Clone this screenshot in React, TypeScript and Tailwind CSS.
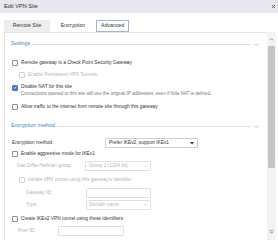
import React from 'react';

const Check = ({ checked = false, disabled = false }: { checked?: boolean; disabled?: boolean }) => (
  <div
    className={
      checked
        ? 'w-[6px] h-[6px] rounded-[1px] bg-[#4a78c2] border border-[#4a78c2] flex items-center justify-center shrink-0'
        : disabled
        ? 'w-[6px] h-[6px] rounded-[1px] bg-white border border-[#d0d0d0] shrink-0'
        : 'w-[6px] h-[6px] rounded-[1px] bg-white border border-[#8c8c8c] shrink-0'
    }
  >
    {checked && (
      <svg width="5" height="5" viewBox="0 0 10 10">
        <path d="M1.5 5.2 L4 7.6 L8.6 2.4" fill="none" stroke="white" strokeWidth="1.8" />
      </svg>
    )}
  </div>
);

const Chevron = ({ color = '#9a9a9a', size = 5 }: { color?: string; size?: number }) => (
  <svg width={size} height={size} viewBox="0 0 10 10">
    <path d="M2 3.5 L5 6.5 L8 3.5" fill="none" stroke={color} strokeWidth="1.4" />
  </svg>
);

const Section = ({ title }: { title: string }) => (
  <div className="flex items-center h-[8px] -ml-[1px] pr-[8px]">
    <span className="text-[5.3px] leading-none text-[#3d85c6]">{title}</span>
    <div className="flex-1 h-px bg-[#e0e0e0] ml-[2px] mr-[4px]" />
    <Chevron />
  </div>
);

const CheckRow = ({
  label,
  checked,
  disabled,
  indent,
  className = '',
}: {
  label: string;
  checked?: boolean;
  disabled?: boolean;
  indent?: boolean;
  className?: string;
}) => (
  <div className={`flex items-center gap-[3px] h-[8px] ${indent ? 'ml-[7px]' : ''} ${className}`}>
    <Check checked={checked} disabled={disabled} />
    <span className={`text-[4.8px] leading-none ${disabled ? 'text-[#b4b4b4]' : 'text-[#333]'}`}>{label}</span>
  </div>
);

export default function App() {
  return (
    <div className="w-[278px] h-[240px] bg-white overflow-hidden font-['Liberation_Sans',Arial,sans-serif]">
      <div className="h-[13px] bg-[#e7e7ef] flex items-center justify-between pl-[4px] pr-[2px]">
        <span className="text-[5.6px] leading-none text-[#333]">Edit VPN Site</span>
        <svg width="5" height="5" viewBox="0 0 10 10">
          <path d="M2 2 L8 8 M8 2 L2 8" stroke="#555" strokeWidth="1.6" />
        </svg>
      </div>

      <div className="mt-[7px] h-[12px] flex pl-[4px] text-[5.2px] leading-none text-[#333]">
        <div className="w-[46px] bg-[#eeeeee] flex items-center justify-center">Remote Site</div>
        <div className="w-[46px] flex items-center justify-center">Encryption</div>
        <div className="w-[33px] border border-[#9fb4d4] bg-white flex items-center justify-center">Advanced</div>
      </div>

      <div className="flex h-[208px]">
        <div className="ml-[4px] flex-1 border-t border-l border-[#e3e3e3] pl-[7px] pt-[7px] flex flex-col">
          <Section title="Settings" />
          <CheckRow className="mt-[11px]" label="Remote gateway is a Check Point Security Gateway" />
          <CheckRow className="mt-[4px]" indent disabled label="Enable Permanent VPN Tunnels" />
          <CheckRow className="mt-[5px] !h-[7px]" checked label="Disable NAT for this site" />
          <div className="h-[6px] flex items-center pl-[9px] text-[4.6px] leading-none text-[#7a7a7a]">
            Connections opened to this site will use the original IP addresses, even if hide NAT is defined.
          </div>
          <CheckRow className="mt-[6px]" label="Allow traffic to the internet from remote site through this gateway" />

          <div className="mt-[11px]">
            <Section title="Encryption method" />
          </div>

          <div className="mt-[8px] h-[10px] flex items-center">
            <span className="w-[93px] text-[4.8px] leading-none text-[#333]">Encryption method:</span>
            <div className="w-[93px] h-[10px] border border-[#cfcfcf] rounded-[1px] flex items-center justify-between pl-[3px] pr-[3px]">
              <span className="text-[4.8px] leading-none text-[#333]">Prefer IKEv2, support IKEv1</span>
              <svg width="4" height="3" viewBox="0 0 8 6">
                <path d="M0 0 L8 0 L4 5 Z" fill="#333" />
              </svg>
            </div>
          </div>

          <CheckRow className="mt-[2px]" label="Enable aggressive mode for IKEv1" />

          <div className="mt-[3px] h-[10px] flex items-center ml-[5px]">
            <span className="w-[68px] text-[4.8px] leading-none text-[#b4b4b4]">Use Diffie-Hellman group:</span>
            <div className="w-[66px] h-[10px] border border-[#e0e0e0] rounded-[1px] flex items-center justify-between pl-[3px] pr-[2px]">
              <span className="text-[4.8px] leading-none text-[#b4b4b4]">Group 2 (1024 bit)</span>
              <Chevron size={4} color="#aaa" />
            </div>
          </div>

          <CheckRow className="mt-[5px]" indent disabled label="Initiate VPN tunnel using this gateway's identifier" />

          <div className="mt-[4px] h-[10px] flex items-center ml-[14px]">
            <span className="w-[60px] text-[4.8px] leading-none text-[#b4b4b4]">Gateway ID:</span>
            <div className="w-[65px] h-[10px] border border-[#e0e0e0] rounded-[1px]" />
          </div>

          <div className="mt-[2px] h-[10px] flex items-center ml-[14px]">
            <span className="w-[60px] text-[4.8px] leading-none text-[#b4b4b4]">Type:</span>
            <div className="w-[65px] h-[10px] border border-[#e0e0e0] rounded-[1px] flex items-center justify-between pl-[2px] pr-[2px]">
              <span className="text-[4.8px] leading-none text-[#b4b4b4]">Domain name</span>
              <Chevron size={4} color="#aaa" />
            </div>
          </div>

          <CheckRow className="mt-[5px]" label="Create IKEv2 VPN tunnel using these identifiers:" />

          <div className="mt-[3px] h-[10px] flex items-center ml-[6px]">
            <span className="w-[40px] text-[4.8px] leading-none text-[#b4b4b4]">Peer ID:</span>
            <div className="w-[66px] h-[10px] border border-[#e0e0e0] rounded-[1px]" />
          </div>
        </div>

        <div className="w-[9px] mr-[2px] bg-[#f3f3f3] flex flex-col items-center">
          <div className="mt-[5px] rotate-180">
            <Chevron color="#666" size={5} />
          </div>
          <div className="mt-[4px] w-[7px] h-[122px] bg-[#c4c4c4] rounded-[1px]" />
          <div className="mt-auto mb-[5px] flex flex-col -space-y-[3px]">
            <Chevron color="#666" size={5} />
            <Chevron color="#666" size={5} />
          </div>
        </div>
      </div>
    </div>
  );
}
